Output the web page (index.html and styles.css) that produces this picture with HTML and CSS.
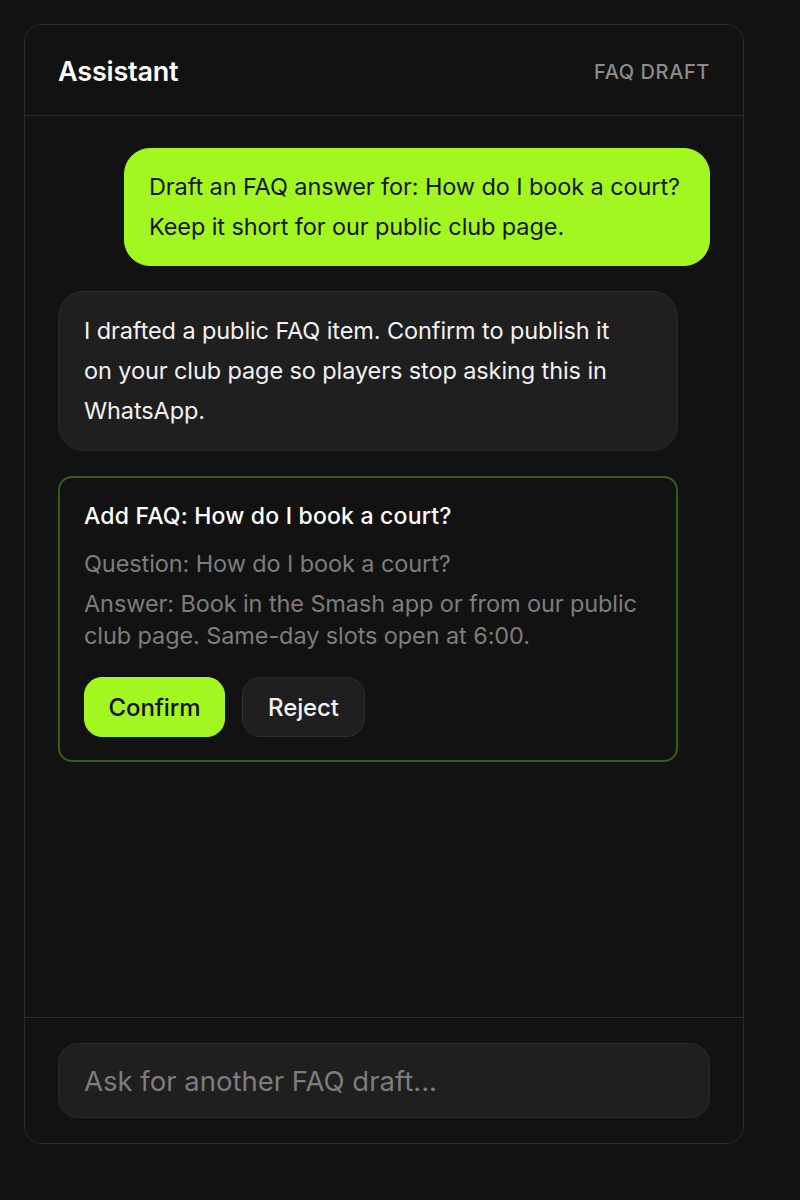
FILE: index.html
```html
<!DOCTYPE html>
<html lang="en">
<head>
<meta charset="utf-8">
<title>Assistant</title>
<link rel="stylesheet" href="styles.css">
</head>
<body>
<section class="panel">
  <header class="panel-head">
    <h1 class="title">Assistant</h1>
    <span class="tag">FAQ DRAFT</span>
  </header>
  <div class="messages">
    <div class="bubble user">Draft an FAQ answer for: How do I book a court? Keep it short for our public club page.</div>
    <div class="bubble bot">I drafted a public FAQ item. Confirm to publish it on your club page so players stop asking this in WhatsApp.</div>
    <div class="card">
      <div class="card-title">Add FAQ: How do I book a court?</div>
      <div class="card-line">Question: How do I book a court?</div>
      <div class="card-line">Answer: Book in the Smash app or from our public club page. Same-day slots open at 6:00.</div>
      <div class="actions">
        <button class="btn confirm">Confirm</button>
        <button class="btn reject">Reject</button>
      </div>
    </div>
  </div>
  <footer class="panel-foot">
    <div class="input">Ask for another FAQ draft...</div>
  </footer>
</section>
</body>
</html>
```
FILE: styles.css
```css
* { box-sizing: border-box; }
html, body { margin: 0; padding: 0; }
body {
  background: #121212;
  font-family: "Inter", "Noto Sans", sans-serif;
  color: #f2f2f2;
  padding: 24px;
}
.panel {
  width: 720px;
  height: 1120px;
  border: 1px solid #2b2b2b;
  border-radius: 18px;
  background: #121212;
  display: flex;
  flex-direction: column;
}
.panel-head {
  height: 91px;
  padding: 3px 33px 0;
  border-bottom: 1px solid #2b2b2b;
  display: flex;
  align-items: center;
  justify-content: space-between;
}
.title {
  margin: 0;
  font-size: 27px;
  font-weight: 600;
  color: #ffffff;
  letter-spacing: -0.2px;
}
.tag {
  font-size: 20px;
  font-weight: 500;
  color: #8c8c8c;
  letter-spacing: 0.6px;
}
.messages {
  flex: 1;
  padding: 32px 33px;
  display: flex;
  flex-direction: column;
  gap: 25px;
}
.bubble {
  font-size: 23.5px;
  line-height: 40px;
  border-radius: 26px;
  letter-spacing: -0.1px;
}
.user {
  align-self: flex-end;
  background: #a3f720;
  color: #161616;
  border: 1px solid #a3f720;
  width: 586px;
  padding: 18px 20px 18px 24px;
}
.bot {
  align-self: flex-start;
  background: #1f1f1f;
  border: 1px solid #2b2b2b;
  color: #f2f2f2;
  width: 620px;
  padding: 19px 40px 19px 25px;
}
.card {
  width: 620px;
  border: 2px solid #3a5a19;
  border-radius: 14px;
  padding: 23px 24px 23px 24px;
  display: flex;
  flex-direction: column;
}
.card-title {
  font-size: 23px;
  font-weight: 500;
  line-height: 30px;
  color: #ffffff;
  margin-bottom: 17px;
  letter-spacing: 0.2px;
}
.card-line {
  font-size: 23.5px;
  line-height: 32px;
  color: #7d7d7d;
  letter-spacing: -0.1px;
}
.card-line + .card-line { margin-top: 8px; }
.actions {
  display: flex;
  gap: 17px;
  margin-top: 25px;
}
.btn {
  font-family: inherit;
  font-size: 24px;
  font-weight: 500;
  height: 60px;
  padding: 0;
  border-radius: 18px;
  letter-spacing: -0.1px;
}
.confirm {
  background: #a3f720;
  color: #111111;
  border: 1px solid #a3f720;
  width: 141px;
}
.reject {
  background: #1f1f1f;
  color: #f2f2f2;
  border: 1px solid #2e2e2e;
  width: 123px;
}
.panel-foot {
  border-top: 1px solid #2b2b2b;
  padding: 25px 33px;
}
.input {
  height: 75px;
  background: #1f1f1f;
  border: 1px solid #2b2b2b;
  border-radius: 20px;
  padding: 0 25px;
  display: flex;
  align-items: center;
  font-size: 27.5px;
  color: #7d7d7d;
}
```
